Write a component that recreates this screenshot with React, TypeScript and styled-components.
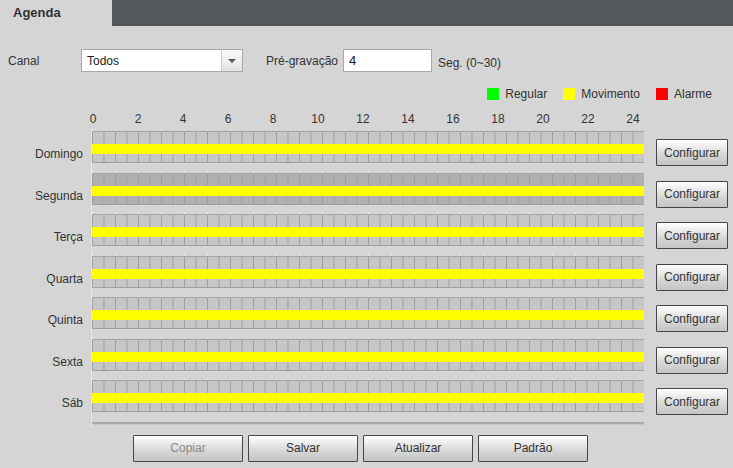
import React from 'react';
import styled, { createGlobalStyle } from 'styled-components';

const days = ['Domingo', 'Segunda', 'Terça', 'Quarta', 'Quinta', 'Sexta', 'Sáb'];
const hours = [0, 2, 4, 6, 8, 10, 12, 14, 16, 18, 20, 22, 24];

const GlobalStyle = createGlobalStyle`
    body {
        margin: 0;
        background: #d5d5d5;
        font-family: 'Liberation Sans', Arial, sans-serif;
        font-size: 12px;
        color: #333;
    }
`;

function App() {
    return <>
        <GlobalStyle />
        <Page>
            <TabBar>
                <Tab>Agenda</Tab>
                <TabFill />
            </TabBar>

            <FormRow>
                <FieldLabel>Canal</FieldLabel>
                <Select>
                    <SelectText>Todos</SelectText>
                    <SelectArrow><Triangle /></SelectArrow>
                </Select>
                <FieldLabel2>Pré-gravação</FieldLabel2>
                <TextInput>4</TextInput>
                <Hint>Seg. (0~30)</Hint>
            </FormRow>

            <Legend>
                <LegendItem><Swatch color="#00ff00" />Regular</LegendItem>
                <LegendItem><Swatch color="#ffff00" />Movimento</LegendItem>
                <LegendItem><Swatch color="#ff0000" />Alarme</LegendItem>
            </Legend>

            <Axis>
                {hours.map(h => <AxisLabel key={h}>{h}</AxisLabel>)}
            </Axis>

            <Schedule>
                {days.map((day, i) => (
                    <DayRow key={day}>
                        <DayLabel>{day}</DayLabel>
                        <Track>
                            <Ticks />
                            <Cells dark={i === 1}>
                                <Band />
                            </Cells>
                        </Track>
                        <ConfigButton>Configurar</ConfigButton>
                    </DayRow>
                ))}
                <EndLine />
            </Schedule>

            <Actions>
                <ActionButton disabled>Copiar</ActionButton>
                <ActionButton>Salvar</ActionButton>
                <ActionButton>Atualizar</ActionButton>
                <ActionButton>Padrão</ActionButton>
            </Actions>
        </Page>
    </>
}

export default App;

const Page = styled.div`
    width: 733px;
    height: 468px;
    overflow: hidden;
`

const TabBar = styled.div`
    display: flex;
    height: 26px;
`

const Tab = styled.div`
    width: 112px;
    box-sizing: border-box;
    padding-left: 13px;
    font-size: 13px;
    font-weight: 700;
    line-height: 25px;
    color: #333;
`

const TabFill = styled.div`
    flex: 1;
    background: #55585b;
`

const FormRow = styled.div`
    display: flex;
    align-items: center;
    height: 23px;
    margin-top: 23px;
    padding-left: 8px;
`

const FieldLabel = styled.span`
    width: 73px;
    font-size: 12px;
`

const FieldLabel2 = styled.span`
    width: 77px;
    margin-left: 23px;
    font-size: 12px;
`

const Select = styled.div`
    width: 162px;
    height: 23px;
    box-sizing: border-box;
    border: 1px solid #a9a9a9;
    background: #fff;
    display: flex;
    align-items: center;
`

const SelectText = styled.span`
    flex: 1;
    padding-left: 5px;
    font-size: 12px;
    color: #222;
`

const SelectArrow = styled.div`
    width: 20px;
    height: 21px;
    border-left: 1px solid #d0d0d0;
    background: linear-gradient(#fafafa, #e2e2e2);
    display: flex;
    align-items: center;
    justify-content: center;
`

const Triangle = styled.div`
    width: 0;
    height: 0;
    border-left: 4px solid transparent;
    border-right: 4px solid transparent;
    border-top: 4px solid #555;
`

const TextInput = styled.div`
    width: 89px;
    height: 23px;
    box-sizing: border-box;
    border: 1px solid #a9a9a9;
    background: #fff;
    padding-left: 5px;
    line-height: 21px;
    font-size: 13px;
    color: #111;
`

const Hint = styled.span`
    margin-left: 6px;
    margin-top: 4px;
    font-size: 12px;
`

const Legend = styled.div`
    display: flex;
    justify-content: flex-end;
    gap: 16px;
    margin-top: 15px;
    padding-right: 21px;
    height: 14px;
`

const LegendItem = styled.div`
    display: flex;
    align-items: center;
    gap: 6px;
    font-size: 12px;
`

const Swatch = styled.span`
    width: 12px;
    height: 12px;
    background: ${props => props.color};
`

const Axis = styled.div`
    display: flex;
    margin-top: 11px;
    margin-left: 70.5px;
    height: 14px;
`

const AxisLabel = styled.span`
    width: 45px;
    flex: none;
    text-align: center;
    font-size: 12px;
    line-height: 14px;
`

const Schedule = styled.div`
    position: relative;
    margin-top: 3px;

    &::before {
        content: '';
        position: absolute;
        left: 91px;
        top: 0;
        bottom: -2px;
        width: 1px;
        background: #e4e4e4;
    }
`

const DayRow = styled.div`
    display: flex;
    align-items: flex-start;
    height: 41.5px;
`

const DayLabel = styled.div`
    width: 83px;
    margin-top: 18px;
    text-align: right;
    font-size: 12px;
    line-height: 14px;
`

const Track = styled.div`
    width: 552px;
    margin-left: 9px;
`

const Ticks = styled.div`
    height: 2px;
    background: linear-gradient(to right, #e8e8e8 1px, transparent 1px) 0 0 / 23px 100% repeat-x;
`

const Cells = styled.div<{ dark?: boolean }>`
    position: relative;
    height: 32px;
    box-sizing: border-box;
    border-top: 1px solid #a6a6a6;
    border-bottom: 1px solid #a0a0a0;
    background-color: ${props => props.dark ? '#b0b0b0' : '#c6c6c6'};
    background-image: linear-gradient(to right, #9e9e9e 1px, transparent 1px);
    background-size: 11.5px 100%;
`

const Band = styled.div`
    position: absolute;
    left: 0;
    right: 0;
    top: 12px;
    height: 10px;
    background: #ffff00;
`

const ConfigButton = styled.button`
    width: 72px;
    height: 27px;
    margin-left: 12px;
    margin-top: 10px;
    border: 1px solid #454545;
    border-radius: 1px;
    background: linear-gradient(#ffffff, #d6d6d6 60%, #c4c4c4);
    font-family: 'Liberation Sans', Arial, sans-serif;
    font-size: 12px;
    color: #333;
    padding: 0;
`

const EndLine = styled.div`
    width: 552px;
    height: 2px;
    margin-left: 92px;
    margin-top: 2px;
    background: #a8a8a8;
    border-bottom: 1px solid #c8c8c8;
`

const Actions = styled.div`
    display: flex;
    gap: 5px;
    margin-top: 10px;
    padding-left: 133px;
`

const ActionButton = styled.button`
    width: 110px;
    height: 27px;
    border: 1px solid #454545;
    border-radius: 1px;
    background: linear-gradient(#ffffff, #d6d6d6 60%, #c4c4c4);
    font-family: 'Liberation Sans', Arial, sans-serif;
    font-size: 12px;
    color: ${props => props.disabled ? '#8a8a8a' : '#333'};
    padding: 0;
`
